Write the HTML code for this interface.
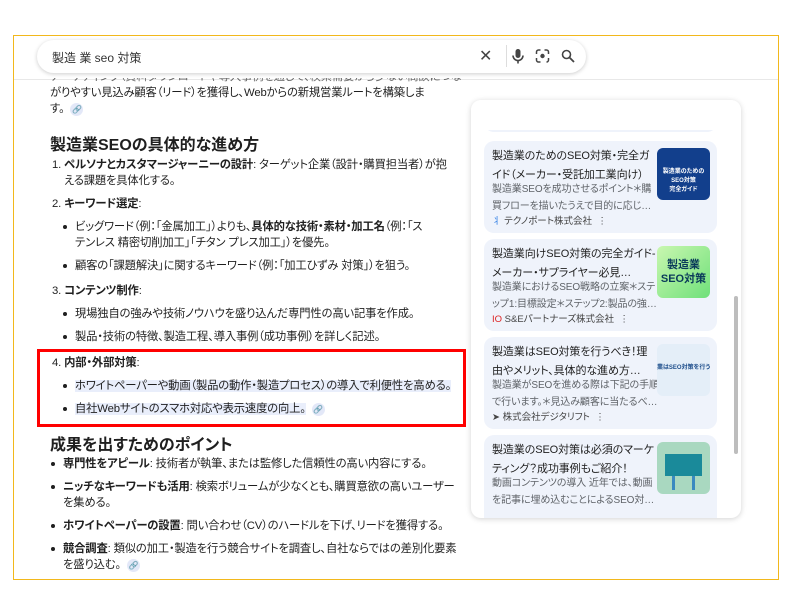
<!DOCTYPE html>
<html><head><meta charset="utf-8"><style>
*{margin:0;padding:0;box-sizing:border-box}
body{width:793px;height:607px;background:#fff;font-family:"Liberation Sans","Noto Sans CJK JP",sans-serif;color:#1f1f1f;position:relative;overflow:hidden;font-feature-settings:"palt"}
.frame{position:absolute;left:13px;top:35px;width:766px;height:545px;border:1px solid #f2b81c;overflow:hidden}
.sep{position:absolute;left:0;top:43px;width:100%;height:1px;background:#e8e8e8}
.search{position:absolute;left:23px;top:4px;width:549px;height:33px;border-radius:17px;background:#fff;box-shadow:0 1px 4px rgba(0,0,0,.2);font-size:12px;color:#333;padding:9px 0 0 15px}
.t{position:absolute;font-size:11.3px;line-height:16px;white-space:nowrap;color:#1f1f1f;letter-spacing:-0.15px}
.h{position:absolute;font-size:16px;font-weight:bold;white-space:nowrap;color:#1f1f1f}
b{font-weight:bold}
.dot{position:absolute;width:4px;height:4px;border-radius:2px;background:#1f1f1f}
.lnk{display:inline-block;width:13px;height:13px;border-radius:7px;background:#e3e8f8;color:#6a7bb0;font-size:8px;text-align:center;line-height:13px;vertical-align:middle;margin-left:6px}
.hl{background:#e9eefb}
.red{position:absolute;left:23px;top:313px;width:429px;height:78px;border:3px solid #f00}
.panel{position:absolute;left:457px;top:64px;width:270px;height:418px;background:#fff;border-radius:10px;box-shadow:0 1px 6px rgba(0,0,0,.18);overflow:hidden}
.card{position:absolute;left:13px;width:233px;height:92px;background:#eff3fb;border-radius:10px;overflow:hidden}
.ct{position:absolute;left:8px;top:6px;font-size:11px;line-height:19px;color:#1f1f1f;white-space:nowrap;letter-spacing:-0.1px}
.cs{position:absolute;left:8px;top:40px;font-size:10px;line-height:17px;color:#5f6368;white-space:nowrap;letter-spacing:-0.1px}
.src{position:absolute;left:8px;top:72px;font-size:9.5px;color:#444;white-space:nowrap}
.th{position:absolute;left:173px;top:7px;width:53px;height:52px;border-radius:6px;overflow:hidden;font-size:6px;color:#fff;text-align:center}
</style></head><body>
<div class="frame">
<div class="search">製造 業 seo 対策
<span style="position:absolute;left:442px;top:6px;font-size:16px;color:#444">✕</span>
<span style="position:absolute;left:469px;top:5px;width:1px;height:22px;background:#ddd"></span>
<svg style="position:absolute;left:474px;top:9px" width="14" height="15" viewBox="0 0 14 15"><rect x="4.5" y="0" width="5" height="9" rx="2.5" fill="#444"/><path d="M2 6.5a5 5 0 0 0 10 0M7 11.5v3" stroke="#444" stroke-width="1.6" fill="none"/></svg>
<svg style="position:absolute;left:498px;top:9px" width="15" height="14" viewBox="0 0 15 14"><path d="M1.5 5V3a2 2 0 0 1 2-2h2M9.5 1h2a2 2 0 0 1 2 2v2M13.5 9v2a2 2 0 0 1-2 2M5.5 13h-2a2 2 0 0 1-2-2V9" stroke="#444" stroke-width="1.5" fill="none"/><circle cx="7.5" cy="7" r="2.2" fill="#444"/></svg>
<svg style="position:absolute;left:524px;top:9px" width="14" height="14" viewBox="0 0 14 14"><circle cx="5.5" cy="5.5" r="4" stroke="#444" stroke-width="1.6" fill="none"/><path d="M8.5 8.5l4.5 4.5" stroke="#444" stroke-width="1.8"/></svg>
</div>
<div class="sep"></div>

<div class="t" style="left:36px;top:33px;color:#666;clip-path:inset(9px 0 0 0)">ナーケティング（資料ダウンロードや導入事例を通じて、検索需要から少ない商談につな</div>
<div class="t" style="left:36px;top:49px">がりやすい見込み顧客（リード）を獲得し、Webからの新規営業ルートを構築しま</div>
<div class="t" style="left:36px;top:65px">す。<span class="lnk">🔗</span></div>
<div class="h" style="left:36px;top:95px">製造業SEOの具体的な進め方</div>
<div class="t" style="left:38px;top:121px">1. <b>ペルソナとカスタマージャーニーの設計</b>: ターゲット企業（設計・購買担当者）が抱</div>
<div class="t" style="left:50px;top:137px">える課題を具体化する。</div>
<div class="t" style="left:38px;top:160px">2. <b>キーワード選定</b>:</div>
<div class="dot" style="left:49px;top:189px"></div><div class="t" style="left:61px;top:183px">ビッグワード（例：「金属加工」）よりも、<b>具体的な技術・素材・加工名</b>（例：「ス</div>
<div class="t" style="left:61px;top:199px">テンレス 精密切削加工」「チタン プレス加工」）を優先。</div>
<div class="dot" style="left:49px;top:228px"></div><div class="t" style="left:61px;top:222px">顧客の「課題解決」に関するキーワード（例：「加工ひずみ 対策」）を狙う。</div>
<div class="t" style="left:38px;top:247px">3. <b>コンテンツ制作</b>:</div>
<div class="dot" style="left:49px;top:276px"></div><div class="t" style="left:61px;top:270px">現場独自の強みや技術ノウハウを盛り込んだ専門性の高い記事を作成。</div>
<div class="dot" style="left:49px;top:299px"></div><div class="t" style="left:61px;top:293px">製品・技術の特徴、製造工程、導入事例（成功事例）を詳しく記述。</div>
<div class="t" style="left:38px;top:319px">4. <b>内部・外部対策</b>:</div>
<div class="dot" style="left:49px;top:348px"></div><div class="t" style="left:61px;top:342px"><span class="hl">ホワイトペーパーや動画（製品の動作・製造プロセス）の導入で利便性を高める。</span></div>
<div class="dot" style="left:49px;top:371px"></div><div class="t" style="left:61px;top:365px"><span class="hl">自社Webサイトのスマホ対応や表示速度の向上。</span><span class="lnk">🔗</span></div>
<div class="red"></div>
<div class="h" style="left:36px;top:395px">成果を出すためのポイント</div>
<div class="dot" style="left:37px;top:426px"></div><div class="t" style="left:49px;top:420px"><b>専門性をアピール</b>: 技術者が執筆、または監修した信頼性の高い内容にする。</div>
<div class="dot" style="left:37px;top:449px"></div><div class="t" style="left:49px;top:443px"><b>ニッチなキーワードも活用</b>: 検索ボリュームが少なくとも、購買意欲の高いユーザー</div>
<div class="t" style="left:49px;top:459px">を集める。</div>
<div class="dot" style="left:37px;top:488px"></div><div class="t" style="left:49px;top:482px"><b>ホワイトペーパーの設置</b>: 問い合わせ（CV）のハードルを下げ、リードを獲得する。</div>
<div class="dot" style="left:37px;top:511px"></div><div class="t" style="left:49px;top:505px"><b>競合調査</b>: 類似の加工・製造を行う競合サイトを調査し、自社ならではの差別化要素</div>
<div class="t" style="left:49px;top:521px">を盛り込む。<span class="lnk">🔗</span></div>

<div class="panel">
<div style="position:absolute;left:233px;top:8px;font-size:16px;color:#222">✕</div>
<div class="card" style="top:-60px"></div>
<div style="position:absolute;left:0;top:0;width:270px;height:30px;background:#fff"></div>
<div class="card" style="top:41px">
<div class="ct">製造業のためのSEO対策・完全ガ<br>イド（メーカー・受託加工業向け）</div>
<div class="cs">製造業SEOを成功させるポイント＊購<br>買フローを描いたうえで目的に応じ…</div>
<div class="src"><span style="color:#2a7be4">⺦</span> テクノポート株式会社 &nbsp;⋮</div>
<div class="th" style="background:#123f8c;padding-top:18px;font-weight:bold">製造業のためのSEO対策<br>完全ガイド</div>
</div>
<div class="card" style="top:139px">
<div class="ct">製造業向けSEO対策の完全ガイド-<br>メーカー・サプライヤー必見…</div>
<div class="cs">製造業におけるSEO戦略の立案＊ステ<br>ップ1:目標設定＊ステップ2:製品の強…</div>
<div class="src"><span style="color:#d22">IO</span> S&amp;Eパートナーズ株式会社 &nbsp;⋮</div>
<div class="th" style="background:linear-gradient(135deg,#c9f7b0,#6fe07a);color:#0a3a5a;font-size:11px;font-weight:bold;padding-top:12px;line-height:14px">製造業<br>SEO対策</div>
</div>
<div class="card" style="top:237px">
<div class="ct">製造業はSEO対策を行うべき！理<br>由やメリット、具体的な進め方…</div>
<div class="cs">製造業がSEOを進める際は下記の手順<br>で行います。＊見込み顧客に当たるべ…</div>
<div class="src">➤ 株式会社デジタリフト &nbsp;⋮</div>
<div class="th" style="background:#e4eef8;color:#1f4f8c;padding-top:18px;font-weight:bold;white-space:nowrap">業はSEO対策を行う</div>
</div>
<div class="card" style="top:335px">
<div class="ct">製造業のSEO対策は必須のマーケ<br>ティング？成功事例もご紹介！</div>
<div class="cs">動画コンテンツの導入 近年では、動画<br>を記事に埋め込むことによるSEO対…</div>
<div class="th" style="background:#a9d8c0"><div style="position:absolute;left:8px;top:12px;width:37px;height:22px;background:#1a8a9a"></div><div style="position:absolute;left:15px;top:34px;width:3px;height:14px;background:#3a8ac0"></div><div style="position:absolute;left:35px;top:34px;width:3px;height:14px;background:#3a8ac0"></div></div>
</div>
<div style="position:absolute;left:263px;top:196px;width:4px;height:158px;background:#bdbdbd;border-radius:2px"></div>
</div>
</div>
</body></html>
